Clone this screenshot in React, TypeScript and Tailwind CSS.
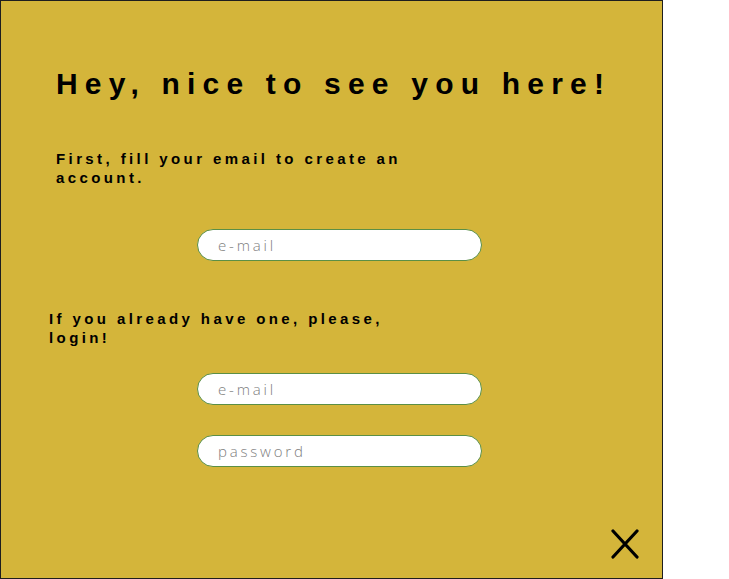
export default function App() {
  const inputClass =
    "w-[285px] h-[32px] rounded-full bg-white border border-[#5b8f45] pl-[20px] text-[15px] tracking-[2.8px] text-[#555] placeholder:text-[#7d7d7d] font-light outline-none";

  return (
    <div className="w-[729px] h-[579px] bg-white" style={{ fontFamily: '"Liberation Sans", Arial, sans-serif' }}>
      <div className="relative flex flex-col w-[663px] h-[579px] bg-[#d4b53a] border border-[#1e1e1e]">
        <h1 className="mt-[66px] ml-[55px] text-[30px] leading-[34px] font-bold tracking-[7.2px] text-black">
          Hey, nice to see you here!
        </h1>

        <p className="mt-[48px] ml-[55px] w-[370px] text-[15px] leading-[19px] font-bold tracking-[3.4px] text-black">
          First, fill your email to create an account.
        </p>

        <div className="mt-[42px] flex pl-[196px]">
          <input type="email" placeholder="e-mail" className={inputClass} style={{ fontFamily: '"Open Sans", sans-serif' }} />
        </div>

        <p className="mt-[48px] ml-[48px] w-[360px] text-[15px] leading-[19px] font-bold tracking-[3.4px] text-black">
          If you already have one, please, login!
        </p>

        <div className="mt-[26px] flex flex-col gap-[30px] pl-[196px]">
          <input type="email" placeholder="e-mail" className={inputClass} style={{ fontFamily: '"Open Sans", sans-serif' }} />
          <input type="password" placeholder="password" className={inputClass} style={{ fontFamily: '"Open Sans", sans-serif' }} />
        </div>

        <div className="mt-auto mb-[19px] mr-[23px] self-end">
          <svg width="28" height="30" viewBox="0 0 28 30" fill="none">
            <path d="M2 2 L26 28 M26 2 L2 28" stroke="#000" strokeWidth="3.2" strokeLinecap="round" />
          </svg>
        </div>
      </div>
    </div>
  );
}
